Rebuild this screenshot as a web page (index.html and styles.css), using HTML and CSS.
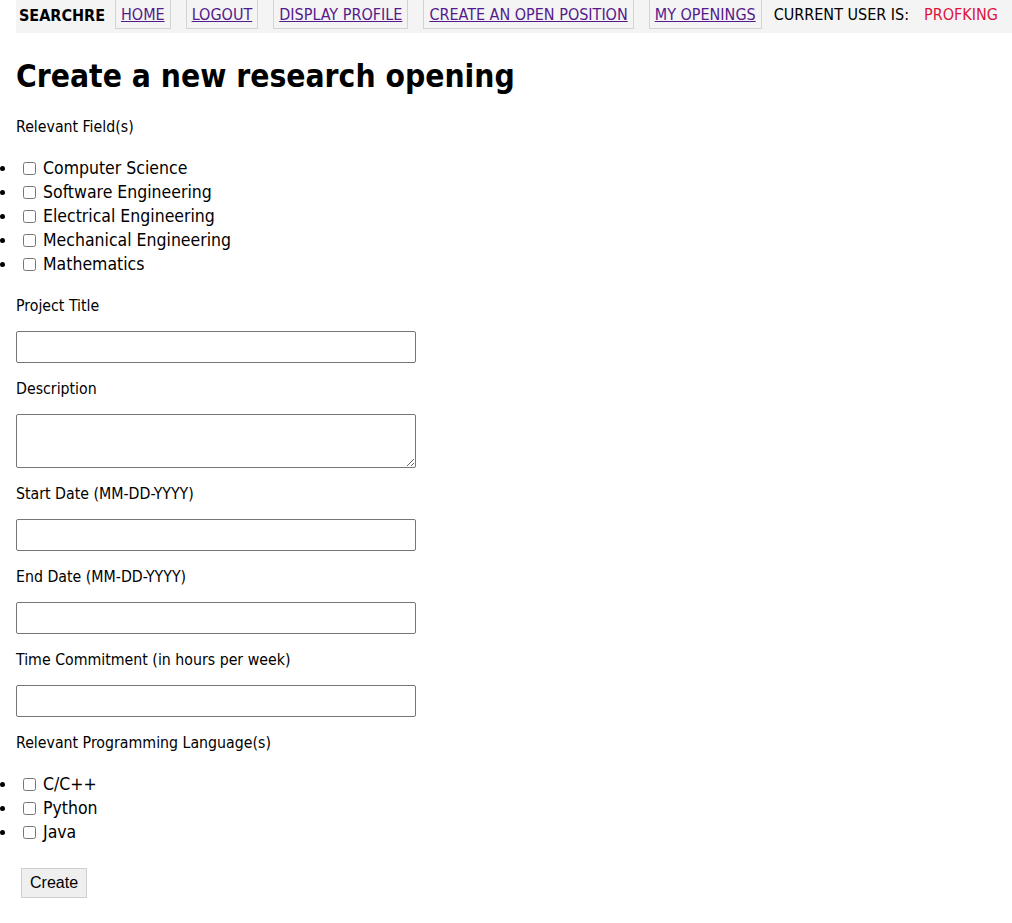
FILE: index.html
```html
<!DOCTYPE html>
<html lang="en">
<head>
<meta charset="utf-8">
<title>SearchRE - Create a new research opening</title>
<link rel="stylesheet" href="styles.css">
</head>
<body>
<nav class="topnav">
  <span class="brand">SEARCHRE</span>
  <a class="navlink" href="#">HOME</a>
  <a class="navlink" href="#">LOGOUT</a>
  <a class="navlink" href="#">DISPLAY PROFILE</a>
  <a class="navlink" href="#">CREATE AN OPEN POSITION</a>
  <a class="navlink navlink-last" href="#">MY OPENINGS</a>
  <span class="user-label">CURRENT USER IS:</span>
  <span class="user-name">PROFKING</span>
</nav>

<h1 class="title">Create a new research opening</h1>

<form class="opening-form">
  <p class="field-label">Relevant Field(s)</p>
  <ul class="check-list">
    <li class="check-item"><span class="bullet"></span><input type="checkbox" id="f1"> <label for="f1">Computer Science</label></li>
    <li class="check-item"><span class="bullet"></span><input type="checkbox" id="f2"> <label for="f2">Software Engineering</label></li>
    <li class="check-item"><span class="bullet"></span><input type="checkbox" id="f3"> <label for="f3">Electrical Engineering</label></li>
    <li class="check-item"><span class="bullet"></span><input type="checkbox" id="f4"> <label for="f4">Mechanical Engineering</label></li>
    <li class="check-item"><span class="bullet"></span><input type="checkbox" id="f5"> <label for="f5">Mathematics</label></li>
  </ul>

  <p class="field-label">Project Title</p>
  <input class="text-input" type="text">

  <p class="field-label">Description</p>
  <textarea class="text-area"></textarea>

  <p class="field-label">Start Date (MM-DD-YYYY)</p>
  <input class="text-input" type="text">

  <p class="field-label">End Date (MM-DD-YYYY)</p>
  <input class="text-input" type="text">

  <p class="field-label">Time Commitment (in hours per week)</p>
  <input class="text-input" type="text">

  <p class="field-label">Relevant Programming Language(s)</p>
  <ul class="check-list">
    <li class="check-item"><span class="bullet"></span><input type="checkbox" id="l1"> <label for="l1">C/C++</label></li>
    <li class="check-item"><span class="bullet"></span><input type="checkbox" id="l2"> <label for="l2">Python</label></li>
    <li class="check-item"><span class="bullet"></span><input type="checkbox" id="l3"> <label for="l3">Java</label></li>
  </ul>

  <button class="create-btn" type="button">Create</button>
</form>
</body>
</html>
```

FILE: styles.css
```css
html {
  background: #ffffff;
}

body {
  margin: 0;
  padding: 0 0 0 16px;
  font-family: "DejaVu Sans Condensed", "DejaVu Sans", sans-serif;
  font-stretch: condensed;
  font-size: 16px;
  color: #000000;
}

.topnav {
  display: flex;
  align-items: flex-start;
  height: 33px;
  background: #f4f4f4;
  font-size: 16px;
  line-height: 26px;
  white-space: nowrap;
}

.brand {
  font-weight: bold;
  padding: 3px 0 0 3px;
  margin-right: 10px;
}

.navlink {
  color: #551a8b;
  text-decoration: underline;
  padding: 2px 5px 0;
  border: 1px solid #d3d3d3;
  border-top: none;
  margin-right: 15px;
}

.navlink-last {
  margin-right: 12px;
}

.user-label {
  padding-top: 2px;
  margin-right: 15px;
}

.user-name {
  padding-top: 2px;
  color: #dc143c;
}

.title {
  font-size: 31.5px;
  font-weight: bold;
  line-height: 37px;
  margin: 25px 0 22px;
}

.field-label {
  margin: 16px 0;
  line-height: 19px;
  font-size: 15.75px;
}

.check-list {
  list-style: none;
  margin: 20px 0 20px -16px;
  padding: 0;
  font-size: 17.5px;
}

.check-item {
  display: flex;
  align-items: center;
  height: 24px;
  line-height: 24px;
}

.bullet {
  flex: none;
  width: 5px;
  height: 5px;
  margin: 1px 0 0 0;
  border-radius: 50%;
  background: #000000;
}

.check-item input {
  flex: none;
  margin: 1px 4px 0 18px;
  width: 13px;
  height: 13px;
}

.check-item label {
  margin-left: 3px;
}

.text-input,
.text-area {
  display: block;
  box-sizing: border-box;
  width: 400px;
  margin: 0;
  border: 1px solid #767676;
  border-radius: 2px;
  background: #ffffff;
  font: inherit;
}

.text-input {
  height: 32px;
}

.text-area {
  height: 54px;
}

.create-btn {
  display: block;
  margin: 24px 0 20px 5px;
  height: 30px;
  padding: 0 8px;
  background: #efefef;
  border: 1px solid #cfcfcf;
  font-family: "Liberation Sans", Arial, sans-serif;
  font-size: 16px;
  color: #000000;
}
```
